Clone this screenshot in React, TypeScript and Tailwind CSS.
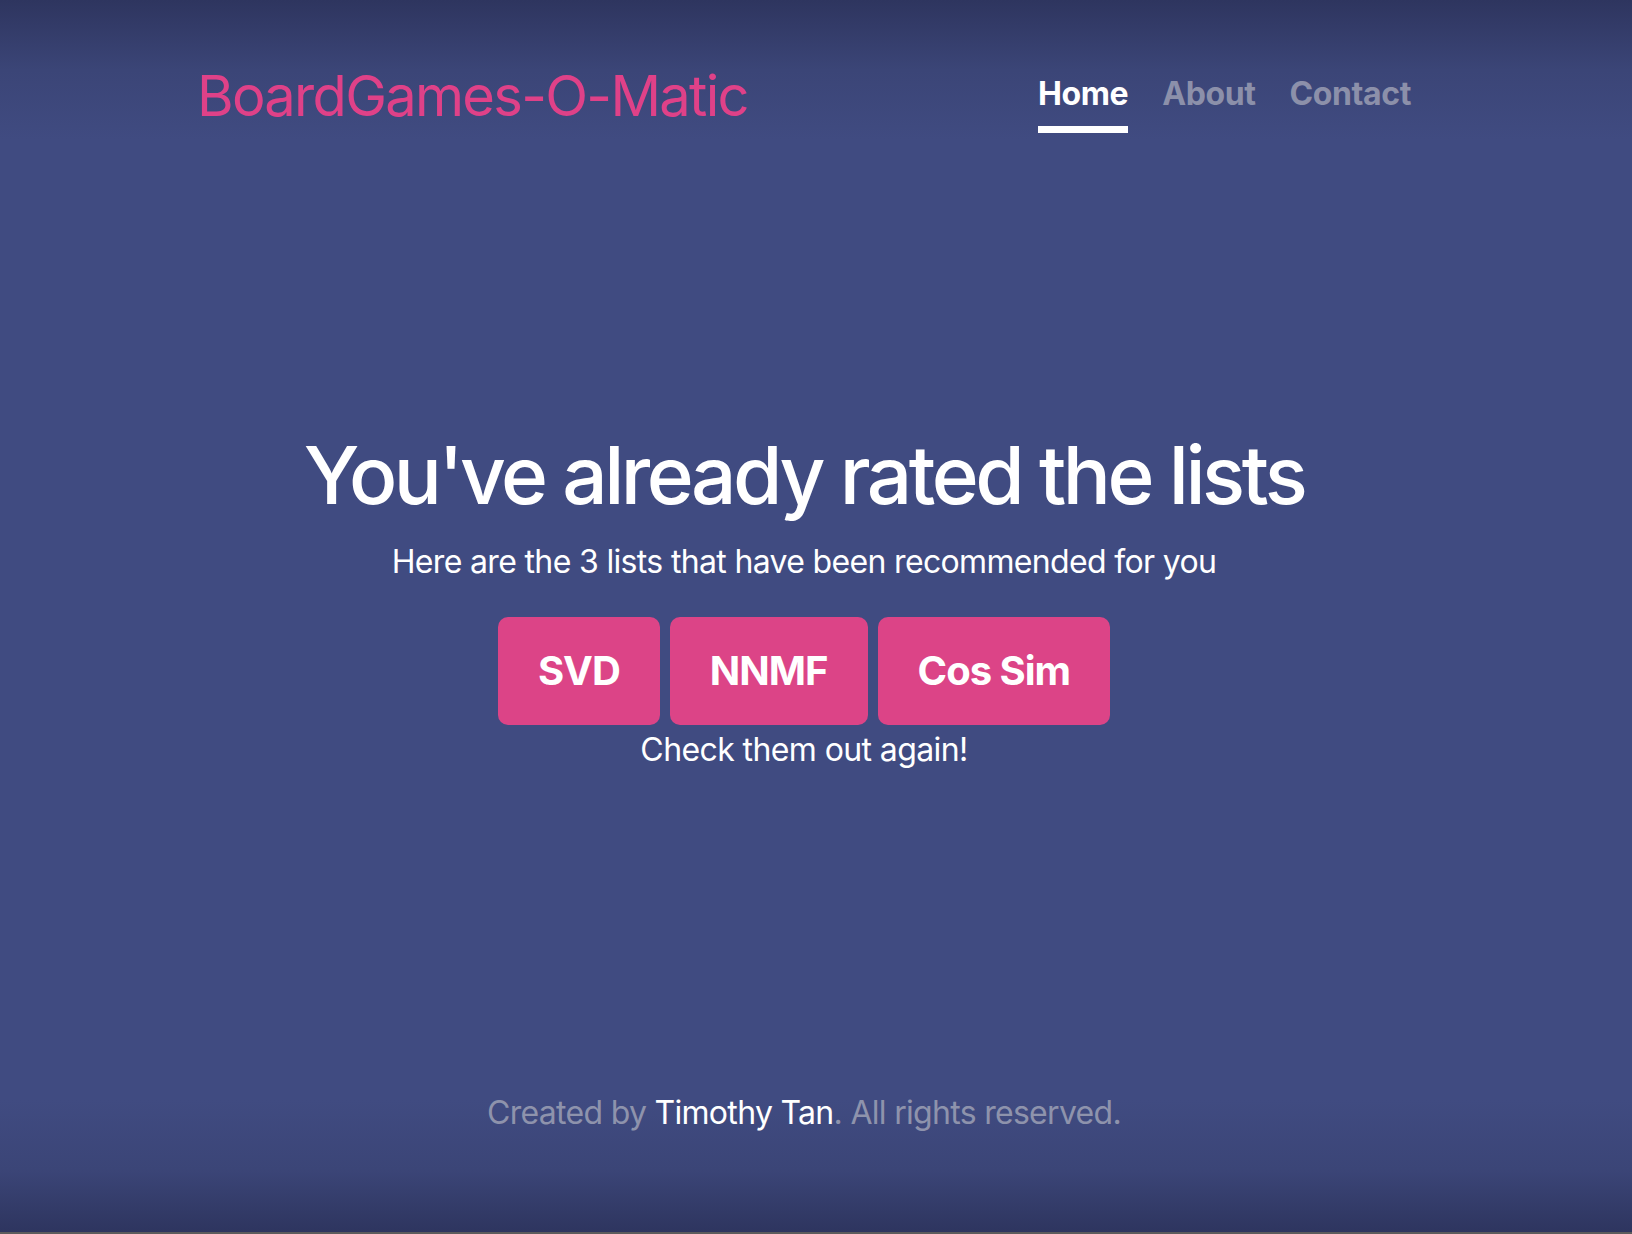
import React from "react";

const lists = ["SVD", "NNMF", "Cos Sim"];

export default function App() {
  return (
    <div
      className="h-[1234px] flex flex-col text-white bg-[linear-gradient(to_bottom,#2e355f_0px,#3b4577_70px,#404b81_140px,#404b81_1100px,#3b4577_1170px,#2e355f_1232px,#5c5c5c_1232px)] font-['Inter','Liberation_Sans',sans-serif]"
    >
      <div className="flex-1 flex flex-col pr-[24px]">
        <header className="w-[1214px] mx-auto pt-[68px] flex items-start justify-between">
          <h3 className="text-[56px] leading-[56px] font-normal text-[#df4188] tracking-[-1.7px]">
            BoardGames-O-Matic
          </h3>
          <nav className="mt-[10px] flex gap-[34px] text-[32px] leading-[32px] font-bold tracking-[-0.4px]">
            <a className="pb-[16px] border-b-[7px] border-white text-white">Home</a>
            <a className="pb-[16px] border-b-[7px] border-transparent text-[#8c90aa]">About</a>
            <a className="pb-[16px] border-b-[7px] border-transparent text-[#8c90aa]">Contact</a>
          </nav>
        </header>

        <main className="mt-[302px] flex flex-col items-center text-center">
          <h1 className="text-[80px] leading-[80px] font-medium tracking-[-3.5px]">
            You've already rated the lists
          </h1>
          <p className="mt-[31px] text-[32px] leading-[32px] tracking-[-0.66px]">
            Here are the 3 lists that have been recommended for you
          </p>
          <div className="mt-[39px] flex gap-[10px]">
            {lists.map((name) => (
              <button
                key={name}
                className="px-[40px] py-[24px] text-[40px] leading-[60px] font-bold bg-[#dc4487] rounded-[10px] text-white tracking-[-1px]"
              >
                {name}
              </button>
            ))}
          </div>
          <p className="mt-[9px] text-[32px] leading-[32px] tracking-[-0.6px]">
            Check them out again!
          </p>
        </main>

        <footer className="mt-auto pb-[105px] text-center text-[32px] leading-[32px] text-[#8e93ac] tracking-[-0.7px]">
          Created by <a className="text-white">Timothy Tan</a>. All rights reserved.
        </footer>
      </div>
    </div>
  );
}
